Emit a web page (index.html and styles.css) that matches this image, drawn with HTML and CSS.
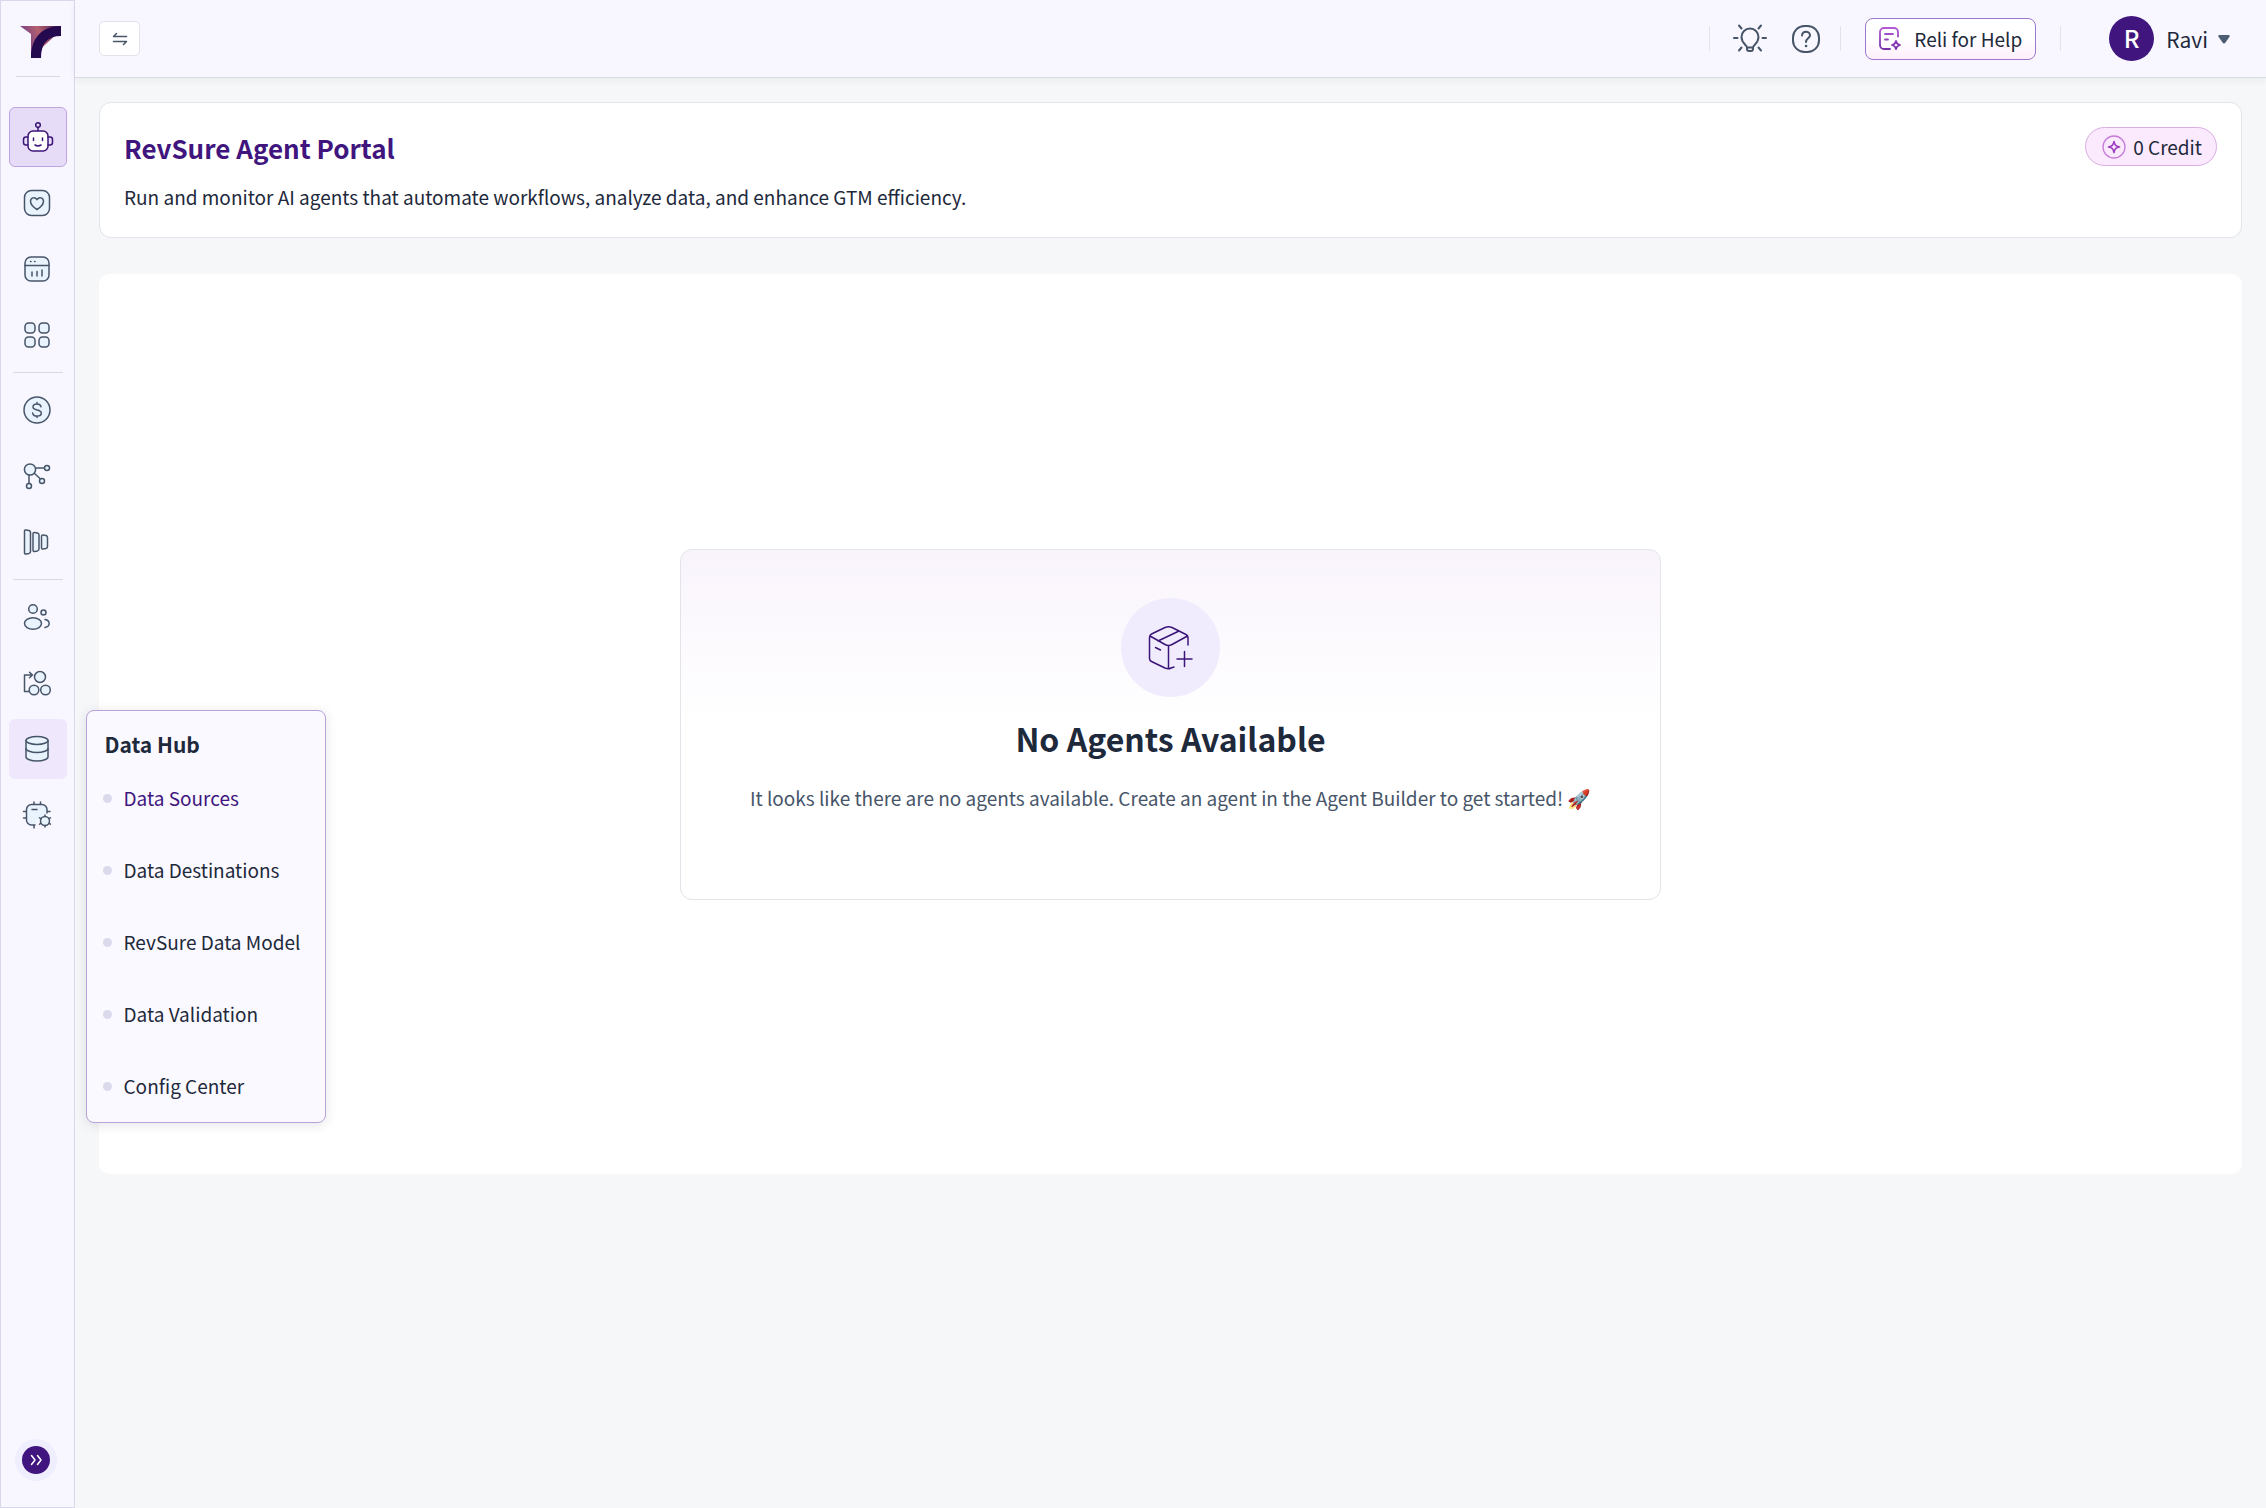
FILE: index.html
```html
<!DOCTYPE html>
<html lang="en">
<head>
<meta charset="utf-8">
<meta name="viewport" content="width=device-width, initial-scale=1">
<title>RevSure Agent Portal</title>
<link rel="stylesheet" href="styles.css">
</head>
<body>
<div class="app">
  <aside class="sidebar">
    <a class="logo" href="#" aria-label="RevSure">
      <svg width="42" height="34" viewBox="0 0 42 34">
        <defs>
          <linearGradient id="logo-warm" x1="1" y1="0" x2="0" y2="0.3">
            <stop offset="0" stop-color="#3a1352"/>
            <stop offset="0.55" stop-color="#b5616f"/>
            <stop offset="1" stop-color="#6d3a8a"/>
          </linearGradient>
        </defs>
        <path d="M0 1H41V5L11 33V9Z" fill="url(#logo-warm)"/>
        <path d="M41 1V11C28 11 21 18 21 33H11C11 13 22 1 41 1Z" fill="#25094f"/>
      </svg>
    </a>
    <hr class="logo-rule">
    <nav class="nav" aria-label="Main">
      <a class="nav-item nav-item--active" href="#" aria-label="Agents">
        <svg width="32" height="32" viewBox="0 0 32 32" class="icon icon--purple">
          <circle cx="16" cy="4" r="2.3"/><path d="M16 6.500V10"/>
          <rect x="6" y="10" width="20" height="20" rx="5" fill="#fff"/>
          <path d="M6 16H4a2.500 2.500 0 0 0-2.500 2.500v3A2.500 2.500 0 0 0 4 24h2M26 16h2a2.500 2.500 0 0 1 2.500 2.500v3A2.500 2.500 0 0 1 28 24h-2M11.500 17v2.500M20.500 17v2.500M13 24c2 1.200 4 1.200 6 0"/>
        </svg>
      </a>
      <a class="nav-item" href="#" aria-label="Health">
        <svg width="28" height="28" viewBox="0 0 28 28" class="icon">
          <rect x="1.500" y="1.500" width="25" height="25" rx="7"/>
          <path d="M14 20.500C10 18 7.500 15.500 7.500 12.300 7.500 8.500 12 7.500 14 10.600 16 7.500 20.500 8.500 20.500 12.300 20.500 15.500 18 18 14 20.500Z"/>
        </svg>
      </a>
      <a class="nav-item" href="#" aria-label="Dashboards">
        <svg width="28" height="28" viewBox="0 0 28 28" class="icon">
          <rect x="2" y="2" width="24" height="24" rx="6"/>
          <path d="M2 10.500h24M9 17v4M14 16.500v4.500M19 15v6"/><path d="M7.500 6.500h.5M11.500 6.500h.5"/>
        </svg>
      </a>
      <a class="nav-item" href="#" aria-label="Apps">
        <svg width="28" height="28" viewBox="0 0 28 28" class="icon">
          <rect x="2" y="2" width="10" height="10" rx="3.500"/><rect x="16" y="2" width="10" height="10" rx="3.500"/>
          <rect x="2" y="16" width="10" height="10" rx="3.500"/><rect x="16" y="16" width="10" height="10" rx="3.500"/>
        </svg>
      </a>
      <hr class="nav-rule">
      <a class="nav-item" href="#" aria-label="Spend">
        <svg width="30" height="30" viewBox="0 0 30 30" class="icon">
          <circle cx="15" cy="15" r="13"/>
          <path d="M19 11.800c-.3-1.700-1.900-2.800-4-2.800-2.300 0-4 1.200-4 3 0 4.200 8.300 1.700 8.300 6 0 1.900-1.800 3.100-4.200 3.100-2.500 0-4.200-1.200-4.400-3M15 7.500V9M15 21v1.500"/>
        </svg>
      </a>
      <a class="nav-item" href="#" aria-label="Attribution">
        <svg width="28" height="28" viewBox="0 0 28 28" class="icon">
          <path d="M13 6h9M11 11l6.500 6M6 13v8.500"/>
          <circle cx="7" cy="7.500" r="5.600"/><circle cx="24" cy="6" r="2.500"/><circle cx="19" cy="19" r="2.500"/><circle cx="6" cy="24" r="2.500"/>
        </svg>
      </a>
      <a class="nav-item" href="#" aria-label="Funnel">
        <svg width="28" height="28" viewBox="0 0 28 28" class="icon">
          <path d="M1.500 3Q1.500 1.800 3 2L6 2.500Q7.500 3 7.500 4.300V23.500Q7.500 25 6 25.400L3 26Q1.500 26.200 1.500 25Z"/>
          <path d="M10 6Q10 4.300 11.500 4.500L14.500 5Q16 5.400 16 7V21Q16 22.400 14.500 22.900L11.500 23.500Q10 23.600 10 22Z"/>
          <path d="M18.500 8.500Q18.500 6.800 20 7L23 7.500Q24.500 8 24.500 9.500V18.500Q24.500 20 23 20.500L20 21Q18.500 21.200 18.500 19.500Z"/>
        </svg>
      </a>
      <hr class="nav-rule">
      <a class="nav-item" href="#" aria-label="Accounts">
        <svg width="28" height="28" viewBox="0 0 28 28" class="icon">
          <circle cx="10" cy="6" r="4.300"/><circle cx="20.500" cy="9.500" r="2.500"/>
          <ellipse cx="10" cy="20.500" rx="8.500" ry="5.700"/><path d="M22 16.500c5.500 1 5.500 7 0 8" fill="none"/>
        </svg>
      </a>
      <a class="nav-item" href="#" aria-label="Journeys">
        <svg width="30" height="28" viewBox="0 0 30 28" class="icon">
          <circle cx="18" cy="8" r="5.500"/><circle cx="12" cy="21" r="4.800"/><circle cx="23.500" cy="21" r="4.800"/>
          <path d="M7 22.500H2.500V6H10.500M7.500 3.200 10.500 6 7.500 8.800" fill="none"/>
        </svg>
      </a>
      <div class="nav-group">
        <a class="nav-item nav-item--hover" href="#" aria-label="Data Hub" aria-expanded="true">
          <svg width="28" height="28" viewBox="0 0 28 28" class="icon">
            <path d="M3 5.500V22c0 2 4.900 4 11 4s11-2 11-4V5.500"/><ellipse cx="14" cy="5.500" rx="11" ry="4"/>
            <path d="M3 13.500c0 2 4.900 4 11 4s11-2 11-4" fill="none"/>
          </svg>
        </a>
        <section class="flyout">
          <h2 class="flyout-title">Data Hub</h2>
          <ul class="flyout-list">
            <li><a class="flyout-link flyout-link--current" href="#">Data Sources</a></li>
            <li><a class="flyout-link" href="#">Data Destinations</a></li>
            <li><a class="flyout-link" href="#">RevSure Data Model</a></li>
            <li><a class="flyout-link" href="#">Data Validation</a></li>
            <li><a class="flyout-link" href="#">Config Center</a></li>
          </ul>
        </section>
      </div>
      <a class="nav-item" href="#" aria-label="Model settings">
        <svg width="30" height="28" viewBox="0 0 30 28" class="icon">
          <path d="M13 24H9.500A5 5 0 0 1 4.500 19V8.500A5 5 0 0 1 9.500 3.500H20A5 5 0 0 1 25 8.500V12L15 19Z" stroke="none"/>
          <path d="M13 24H9.500A5 5 0 0 1 4.500 19V8.500A5 5 0 0 1 9.500 3.500H20A5 5 0 0 1 25 8.500V12M12 3.500V1M18.500 3.500V1M4.500 10.500H1.500M4.500 17H1.500M25 10.500h3M12 24v3M10 8.500h5" fill="none"/>
          <circle cx="23" cy="20" r="4.500"/>
          <path d="M23 15.500v-1.500M23 26v-1.500M19.100 17.700l-1.600-.9M28.500 23.200l-1.600-.9M19.100 22.300l-1.600.9M28.500 16.800l-1.600.9" fill="none"/>
        </svg>
      </a>
    </nav>
    <button class="expand" type="button" aria-label="Expand sidebar">
      <svg width="28" height="28" viewBox="0 0 28 28" fill="none" stroke="#fff" stroke-width="1.500" stroke-linecap="round" stroke-linejoin="round"><path d="M9.500 9.500 13 14 9.500 18.500M15.500 9.500 19 14 15.500 18.500"/></svg>
    </button>
  </aside>

  <div class="page">
    <header class="topbar">
      <button class="swap" type="button" aria-label="Switch workspace">
        <svg width="16" height="14" viewBox="0 0 16 14" fill="none" stroke="#475569" stroke-width="1.500" stroke-linecap="round" stroke-linejoin="round"><path d="M14.500 4.500H1.500L4.500 1.500M1.500 9.500H14.500L11.500 12.500"/></svg>
      </button>
      <div class="topbar-tools">
        <div class="icon-tools">
          <button class="icon-button" type="button" aria-label="Tips">
            <svg width="34" height="30" viewBox="0 0 34 30" class="icon icon--line">
              <path d="M14 23.500c0-2.500-5.500-4-5.500-10.500a8.500 8.500 0 0 1 17 0c0 6.500-5.500 8-5.500 10.500V25a2 2 0 0 1-2 2h-2a2 2 0 0 1-2-2ZM14 23.500h6M1 14h3.500M29.500 14H33M6 1.500l2.500 3M28 1.500l-2.500 3M6 26.500l2.500-3M28 26.500l-2.500-3"/>
            </svg>
          </button>
          <button class="icon-button" type="button" aria-label="Help">
            <svg width="28" height="28" viewBox="0 0 28 28" class="icon icon--line">
              <rect x="1" y="1" width="26" height="26" rx="11.500"/>
              <path d="M10 10.500c.2-2.300 1.800-3.800 4-3.800s4 1.500 4 3.600c0 3-4 3.200-4 6.700"/><path d="M14 21h.1" stroke-width="2.500"/>
            </svg>
          </button>
        </div>
        <button class="help-button" type="button">
          <svg width="22" height="24" viewBox="0 0 22 24" fill="none" stroke="url(#reli)" stroke-width="1.800" stroke-linecap="round" stroke-linejoin="round">
            <defs><linearGradient id="reli" gradientUnits="userSpaceOnUse" x1="11" y1="0" x2="11" y2="24"><stop offset="0" stop-color="#b75ad6"/><stop offset="1" stop-color="#6f2da8"/></linearGradient></defs>
            <path d="M19 9.500V5a4 4 0 0 0-4-4H5a4 4 0 0 0-4 4V18a4 4 0 0 0 4 4H11M6 7h8M6 12.500h3"/>
            <path d="M17 14c.4 2.400 1.300 3.300 4 4-2.700.7-3.600 1.600-4 4-.4-2.400-1.300-3.300-4-4 2.700-.7 3.600-1.600 4-4Z"/>
          </svg>
          <span>Reli for Help</span>
        </button>
        <button class="account" type="button">
          <span class="avatar">R</span>
          <span class="account-name">Ravi</span>
          <svg width="12" height="10" viewBox="0 0 12 10"><path d="M1.500 1H10.500Q12.500 1 11.500 2.700L7.500 8.600Q6 10.400 4.500 8.600L.5 2.700Q-.5 1 1.500 1Z" fill="#4b5e74"/></svg>
        </button>
      </div>
    </header>

    <main class="content">
      <section class="intro">
        <div>
          <h1 class="intro-title">RevSure Agent Portal</h1>
          <p class="intro-text">Run and monitor AI agents that automate workflows, analyze data, and enhance GTM efficiency.</p>
        </div>
        <div class="credit">
          <svg width="24" height="24" viewBox="0 0 24 24" fill="none" stroke-linejoin="round">
            <circle cx="12" cy="12" r="11" stroke="#c77ddc" stroke-width="1.300"/>
            <path d="M12 6.500c.7 3.700 1.800 4.800 5.500 5.500-3.700.7-4.800 1.800-5.500 5.500-.7-3.700-1.800-4.800-5.500-5.500 3.700-.7 4.800-1.800 5.500-5.500Z" stroke="#9d3fc0" stroke-width="1.600"/>
          </svg>
          <span>0 Credit</span>
        </div>
      </section>

      <section class="agents">
        <div class="empty">
          <div class="empty-badge">
            <svg width="46" height="44" viewBox="0 0 46 44" fill="none" stroke="#3b1578" stroke-width="1.500" stroke-linecap="round" stroke-linejoin="round">
              <path d="M40 20V12.500Q40 10.500 38 9.500L24 2.500Q20.500 1 17 2.500L3.500 9Q1.500 10 1.500 12.500V33.500Q1.500 35.500 3.500 36.500L17 43Q20.500 44.500 23 43L26 42M2 11 17 19.500Q20.500 21.500 24 19.500L39.500 11M20.500 21V43.500M10 16 31 6M7.500 22.500 12.500 25M36.500 26.500V41.500M29 34H44"/>
            </svg>
          </div>
          <h2 class="empty-title">No Agents Available</h2>
          <p class="empty-text">It looks like there are no agents available. Create an agent in the Agent Builder to get started! 🚀</p>
        </div>
      </section>
    </main>
  </div>
</div>
</body>
</html>
```
FILE: styles.css
```css
*, *::before, *::after { box-sizing: border-box; }

body {
  margin: 0;
  background: #f6f7f9;
  color: #1e293b;
  font-family: "Noto Sans CJK SC", "Noto Sans", "Noto Color Emoji", sans-serif;
  font-size: 19px;
  line-height: 28px;
}

h1, h2, p, ul { margin: 0; padding: 0; }
a { color: inherit; text-decoration: none; }
button { font: inherit; color: inherit; padding: 0; border: 0; background: none; cursor: pointer; }
svg { display: block; flex: none; overflow: visible; }

.app { display: flex; min-height: 100vh; }

.icon {
  fill: #e9f3fd;
  stroke: #475569;
  stroke-width: 1.5px;
  stroke-linecap: round;
  stroke-linejoin: round;
}
.icon--purple { stroke: #3b1578; fill: none; }
.icon--line { fill: none; stroke-width: 2px; }

/* Sidebar */
.sidebar {
  flex: none;
  width: 75px;
  display: flex;
  flex-direction: column;
  align-items: center;
  padding: 24px 0 33px;
  border: 1px solid #d9d8ec;
  background: #f8f7ff;
}
.logo { margin-left: 6px; }
.logo-rule { width: 44px; margin: 17px 0 30px; border: 0; border-top: 1px solid #d9d8e6; }
.nav { display: flex; flex-direction: column; align-items: center; gap: 6px; }
.nav-item {
  display: flex;
  align-items: center;
  justify-content: center;
  width: 58px;
  height: 60px;
  padding-right: 2px;
  border: 1px solid transparent;
  border-radius: 6px;
}
.nav-item--active { padding-right: 0; background: #e7dcf8; border-color: #bda5df; }
.nav-item--hover { background: #efe8fd; }
.nav-rule { width: 50px; margin: 1px 0; border: 0; border-top: 1px solid #d9d8e6; }
.nav-group { position: relative; }
.expand {
  width: 28px;
  height: 28px;
  margin-top: auto;
  margin-right: 3px;
  border-radius: 50%;
  background: #40167e;
  box-shadow: 0 0 0 7px #efeeff;
}

/* Data Hub flyout */
.flyout {
  position: absolute;
  z-index: 2;
  top: -9px;
  left: 77px;
  width: 240px;
  padding: 19px 16px 22px 18px;
  border: 1px solid #b9a2d8;
  border-radius: 8px;
  background: #faf9ff;
  box-shadow: 0 2px 12px rgba(30, 41, 59, 0.12);
}
.flyout-title { font-size: 21px; font-weight: 700; line-height: 28px; }
.flyout-list { display: grid; gap: 44px; margin-top: 26px; list-style: none; }
.flyout-link { display: flex; align-items: center; gap: 12px; margin-left: -2px; white-space: nowrap; }
.flyout-link::before { content: ""; width: 9px; height: 9px; border-radius: 50%; background: #dbd9ec; }
.flyout-link--current { color: #40167e; }

/* Top bar */
.page { flex: 1; min-width: 0; display: flex; flex-direction: column; }
.topbar {
  display: flex;
  align-items: center;
  justify-content: space-between;
  height: 78px;
  padding: 0 36px 0 24px;
  border-bottom: 1px solid #d9dbe3;
  background: #f8f7ff;
  box-shadow: 0 2px 8px rgba(30, 41, 59, 0.06);
}
.swap {
  display: grid;
  place-items: center;
  width: 41px;
  height: 35px;
  border: 1px solid #e1e2ea;
  border-radius: 5px;
  background: #fff;
}
.topbar-tools { display: flex; align-items: center; gap: 24px; }
.icon-tools {
  display: flex;
  align-items: center;
  gap: 25px;
  height: 25px;
  padding: 0 20px 0 23px;
  border: solid #e1e2ea;
  border-width: 0 1px;
}
.help-button {
  display: flex;
  align-items: center;
  gap: 13px;
  height: 42px;
  padding: 0 13px;
  border: 1px solid #9b78cc;
  border-radius: 8px;
  background: linear-gradient(#fff 50%, #fdeffc);
}
.account { display: flex; align-items: center; }
.account::before { content: ""; width: 1px; height: 25px; margin-right: 48px; background: #e1e2ea; }
.avatar {
  width: 45px;
  height: 45px;
  border-radius: 50%;
  background: #40167e;
  color: #fff;
  font-size: 24px;
  font-weight: 500;
  line-height: 44px;
}
.account-name { margin: 0 10px 0 12px; font-size: 21px; }

/* Content */
.content { display: grid; gap: 36px; padding: 24px; }
.intro {
  display: flex;
  justify-content: space-between;
  align-items: flex-start;
  padding: 24px;
  border: 1px solid #e3e4ec;
  border-radius: 12px;
  background: #fff;
}
.intro-title { color: #40167e; font-size: 26px; font-weight: 700; line-height: 42px; }
.intro-text { margin-top: 12px; line-height: 32px; }
.credit {
  display: flex;
  align-items: center;
  gap: 7px;
  height: 39px;
  padding: 0 14px 0 16px;
  border: 1px solid #d9aee4;
  border-radius: 20px;
  background: #fbeafd;
  white-space: nowrap;
}
.agents {
  display: grid;
  place-items: center;
  min-height: 900px;
  padding: 24px;
  border-radius: 10px;
  background: #fff;
}
.empty {
  display: flex;
  flex-direction: column;
  align-items: center;
  width: 100%;
  max-width: 981px;
  padding: 48px 24px 87px;
  border: 1px solid #e3e4ea;
  border-radius: 12px;
  background: linear-gradient(#f9f4fc, #fff 50%);
  text-align: center;
}
.empty-badge {
  display: grid;
  place-items: center;
  width: 99px;
  height: 99px;
  border-radius: 50%;
  background: #f0ecfe;
}
.empty-title { margin-top: 17px; font-size: 32px; font-weight: 700; line-height: 48px; }
.empty-text { margin-top: 22px; color: #475569; }
```
